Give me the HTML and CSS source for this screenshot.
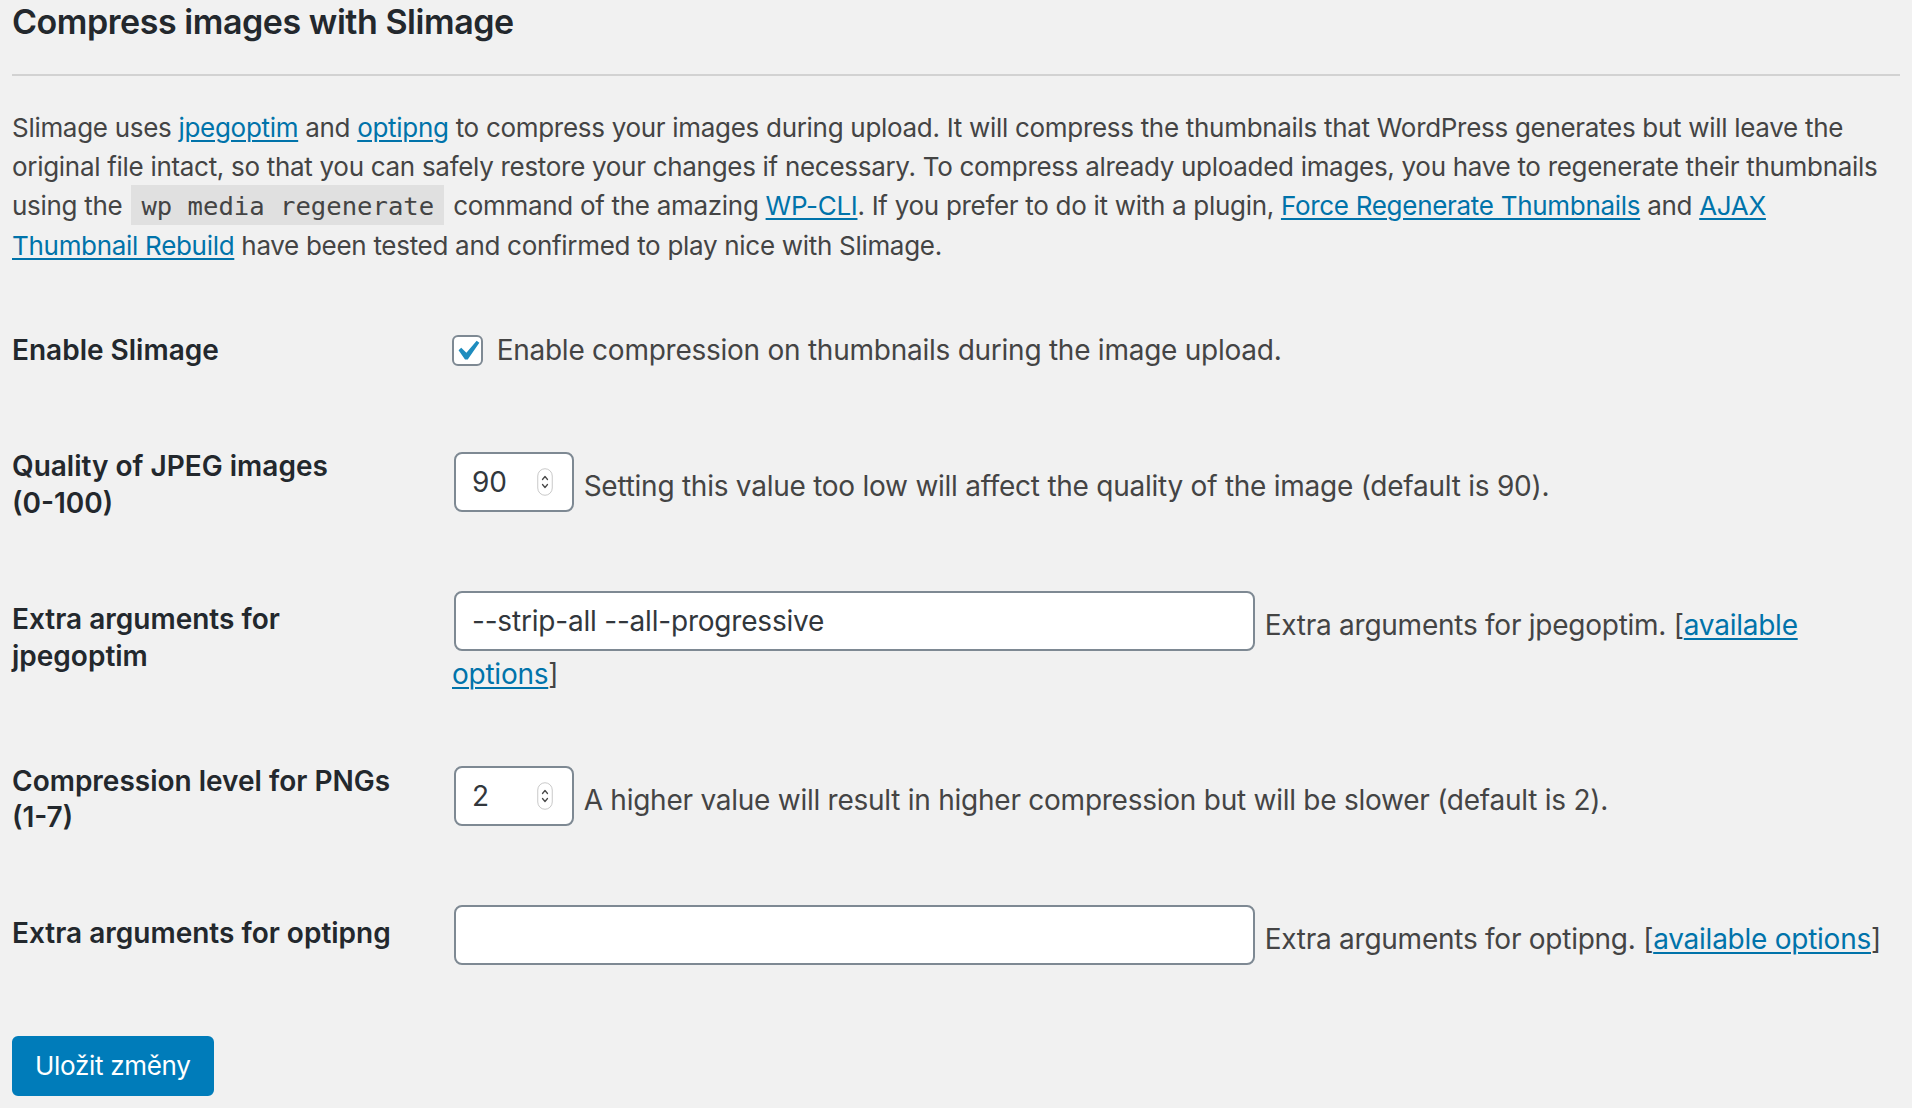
FILE: index.html
```html
<!DOCTYPE html>
<html lang="cs">
<head>
<meta charset="utf-8">
<title>Slimage</title>
<link rel="stylesheet" href="styles.css">
</head>
<body>
<div class="wrap">
  <h2 class="title">Compress images with Slimage</h2>
  <hr class="sep">
  <p class="intro">Slimage uses <a href="#">jpegoptim</a> and <a href="#">optipng</a> to compress your images during upload. It will compress the thumbnails that WordPress generates but will leave the<br>original file intact, so that you can safely restore your changes if necessary. To compress already uploaded images, you have to regenerate their thumbnails<br>using the <code>wp media regenerate</code> command of the amazing <a href="#">WP-CLI</a>. If you prefer to do it with a plugin, <a href="#">Force Regenerate Thumbnails</a> and <a href="#">AJAX<br>Thumbnail Rebuild</a> have been tested and confirmed to play nice with Slimage.</p>
  <table class="form-table">
    <tr>
      <th>Enable Slimage</th>
      <td><label class="check-label"><span class="checkbox"><svg class="checkmark" viewBox="0 0 20 20"><path d="M14.83 4.89l1.34.94-5.81 8.38H9.02L5.78 9.67l1.34-1.25 2.57 2.4z" fill="#1e8cbe"/></svg></span> Enable compression on thumbnails during the image upload.</label></td>
    </tr>
    <tr>
      <th>Quality of JPEG images <span class="nowrap">(0-100)</span></th>
      <td><span class="num-input"><span class="num-value">90</span><svg class="spinner" viewBox="0 0 16 28"><rect x="0.75" y="0.75" width="14.5" height="26.5" rx="7.25" fill="#fff" stroke="#c9c9c9" stroke-width="1"/><path d="M5.5 11.5 8 8.5 10.5 11.5M5.5 16.5 8 19.5 10.5 16.5" fill="none" stroke="#4a4a4a" stroke-width="1.3" stroke-linecap="round" stroke-linejoin="round"/></svg></span> Setting this value too low will affect the quality of the image (default is 90).</td>
    </tr>
    <tr>
      <th>Extra arguments for jpegoptim</th>
      <td><span class="text-input">--strip-all --all-progressive</span> Extra arguments for jpegoptim. [<a href="#">available<br>options</a>]</td>
    </tr>
    <tr>
      <th>Compression level for PNGs <span class="nowrap">(1-7)</span></th>
      <td><span class="num-input"><span class="num-value">2</span><svg class="spinner" viewBox="0 0 16 28"><rect x="0.75" y="0.75" width="14.5" height="26.5" rx="7.25" fill="#fff" stroke="#c9c9c9" stroke-width="1"/><path d="M5.5 11.5 8 8.5 10.5 11.5M5.5 16.5 8 19.5 10.5 16.5" fill="none" stroke="#4a4a4a" stroke-width="1.3" stroke-linecap="round" stroke-linejoin="round"/></svg></span> A higher value will result in higher compression but will be slower (default is 2).</td>
    </tr>
    <tr>
      <th>Extra arguments for optipng</th>
      <td class="nowrap"><span class="text-input"></span> Extra arguments for optipng. [<a href="#">available options</a>]</td>
    </tr>
  </table>
  <p class="submit"><button class="button-primary" type="button">Uložit změny</button></p>
</div>
</body>
</html>
```

FILE: styles.css
```css
html, body {
  margin: 0;
  padding: 0;
  background: #f1f1f1;
}

body {
  font-family: Inter, "Noto Sans", "Liberation Sans", sans-serif;
  color: #444;
}

.wrap {
  padding: 0 12px;
}

.title {
  margin: 0;
  font-size: 34px;
  line-height: 44px;
  font-weight: 600;
  color: #23282d;
  letter-spacing: -0.45px;
}

.sep {
  margin: 30px 0 0;
  border: 0;
  border-top: 2px solid #d2d2d2;
  height: 0;
}

.intro {
  margin: 32px 0 0;
  font-size: 26px;
  line-height: 39px;
  letter-spacing: -0.3px;
  color: #444;
}

a {
  color: #0073aa;
  text-decoration: underline;
  text-decoration-thickness: 2px;
  text-underline-offset: 3px;
}

code {
  font-family: "DejaVu Sans Mono", "Liberation Mono", monospace;
  font-size: 25.6px;
  letter-spacing: 0;
  background: rgba(0, 0, 0, 0.07);
  padding: 6px 10px 4px;
  margin: 0 2px;
  color: #444;
}

.nowrap {
  white-space: nowrap;
}

.form-table {
  border-collapse: collapse;
  width: 100%;
  margin-top: 27px;
}

.form-table th {
  width: 400px;
  padding: 40px 20px 40px 0;
  text-align: left;
  vertical-align: top;
  font-size: 28px;
  line-height: 1.3;
  font-weight: 600;
  color: #23282d;
}

.form-table td {
  padding: 30px 0 30px 20px;
  vertical-align: middle;
  font-size: 28px;
  line-height: 1.3;
  letter-spacing: -0.25px;
  color: #444;
}

.check-label {
  white-space: nowrap;
}

.checkbox {
  display: inline-flex;
  box-sizing: border-box;
  width: 31px;
  height: 31px;
  border: 2px solid #7e8993;
  border-radius: 6px;
  background: #fff;
  vertical-align: middle;
  margin: -4px 6px 0 0;
  overflow: visible;
}

.checkmark {
  width: 40px;
  height: 40px;
  margin: -6px 0 0 -7px;
  flex-shrink: 0;
}

.num-input,
.text-input {
  display: inline-flex;
  align-items: center;
  box-sizing: border-box;
  height: 60px;
  border: 2px solid #7e8993;
  border-radius: 8px;
  background: #fff;
  padding: 0 16px;
  color: #32373c;
  margin: 0 2px 5px;
  vertical-align: 4px;
  letter-spacing: 0;
}

.num-input {
  width: 120px;
  justify-content: space-between;
  padding-right: 19px;
}

.text-input {
  width: 801px;
  letter-spacing: -0.2px;
}

.text-input:empty::before {
  content: "\200b";
}

.spinner {
  width: 16px;
  height: 28px;
}

.submit {
  margin: 36px 0 0;
  padding: 0;
}

.button-primary {
  display: inline-block;
  box-sizing: border-box;
  height: 60px;
  padding: 0 21px;
  background: #007cba;
  border: 2px solid #007cba;
  border-radius: 6px;
  color: #fff;
  font-family: Inter, "Noto Sans", "Liberation Sans", sans-serif;
  font-size: 26px;
  letter-spacing: -0.3px;
  line-height: 56px;
  cursor: pointer;
}
```
